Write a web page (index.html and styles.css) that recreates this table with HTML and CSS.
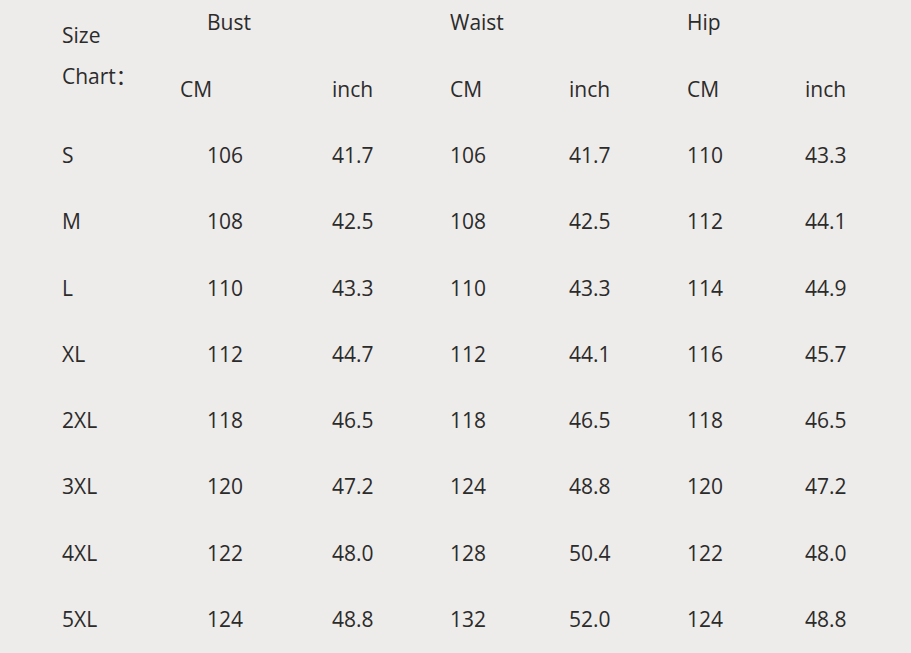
FILE: index.html
```html
<!DOCTYPE html>
<html lang="en">
<head>
<meta charset="utf-8">
<title>Size Chart</title>
<link rel="stylesheet" href="styles.css">
</head>
<body>
<div class="chart">
  <div class="title"><span>Size</span><br><span>Chart：</span></div>
  <div class="group bust">Bust</div>
  <div class="group waist">Waist</div>
  <div class="group hip">Hip</div>

  <div class="sub c1">CM</div>
  <div class="sub c2">inch</div>
  <div class="sub c3">CM</div>
  <div class="sub c4">inch</div>
  <div class="sub c5">CM</div>
  <div class="sub c6">inch</div>

  <div class="cell size">S</div><div class="cell v1">106</div><div class="cell">41.7</div><div class="cell">106</div><div class="cell">41.7</div><div class="cell">110</div><div class="cell">43.3</div>
  <div class="cell size">M</div><div class="cell v1">108</div><div class="cell">42.5</div><div class="cell">108</div><div class="cell">42.5</div><div class="cell">112</div><div class="cell">44.1</div>
  <div class="cell size">L</div><div class="cell v1">110</div><div class="cell">43.3</div><div class="cell">110</div><div class="cell">43.3</div><div class="cell">114</div><div class="cell">44.9</div>
  <div class="cell size">XL</div><div class="cell v1">112</div><div class="cell">44.7</div><div class="cell">112</div><div class="cell">44.1</div><div class="cell">116</div><div class="cell">45.7</div>
  <div class="cell size">2XL</div><div class="cell v1">118</div><div class="cell">46.5</div><div class="cell">118</div><div class="cell">46.5</div><div class="cell">118</div><div class="cell">46.5</div>
  <div class="cell size">3XL</div><div class="cell v1">120</div><div class="cell">47.2</div><div class="cell">124</div><div class="cell">48.8</div><div class="cell">120</div><div class="cell">47.2</div>
  <div class="cell size">4XL</div><div class="cell v1">122</div><div class="cell">48.0</div><div class="cell">128</div><div class="cell">50.4</div><div class="cell">122</div><div class="cell">48.0</div>
  <div class="cell size">5XL</div><div class="cell v1">124</div><div class="cell">48.8</div><div class="cell">132</div><div class="cell">52.0</div><div class="cell">124</div><div class="cell">48.8</div>
</div>
</body>
</html>
```

FILE: styles.css
```css
html, body {
  margin: 0;
  padding: 0;
  background: #eeecea;
}

body {
  width: 911px;
  height: 653px;
  overflow: hidden;
  font-family: "Open Sans", "Noto Sans CJK SC", sans-serif;
  font-size: 21px;
  color: #2b2b2b;
}

.chart {
  display: grid;
  padding-left: 62px;
  grid-template-columns: 118px 152px 118px 119px 118px 118px 1fr;
  grid-template-rows: 46px 75.85px repeat(8, 66.3px);
  align-items: center;
  line-height: 28px;
}

.title {
  grid-column: 1;
  grid-row: 1 / span 2;
  align-self: start;
  padding-top: 14.6px;
  line-height: 41.5px;
}

.group {
  grid-row: 1;
  align-self: center;
  margin-bottom: 2px;
}

.bust {
  grid-column: 2 / span 2;
  padding-left: 27px;
}

.waist {
  grid-column: 4 / span 2;
}

.hip {
  grid-column: 6 / span 2;
}

.sub {
  grid-row: 2;
  align-self: start;
  padding-top: 29.4px;
}

.c1 { grid-column: 2; }
.c2 { grid-column: 3; }
.c3 { grid-column: 4; }
.c4 { grid-column: 5; }
.c5 { grid-column: 6; }
.c6 { grid-column: 7; }

.cell {
  white-space: nowrap;
}

.v1 {
  padding-left: 27px;
}
```
